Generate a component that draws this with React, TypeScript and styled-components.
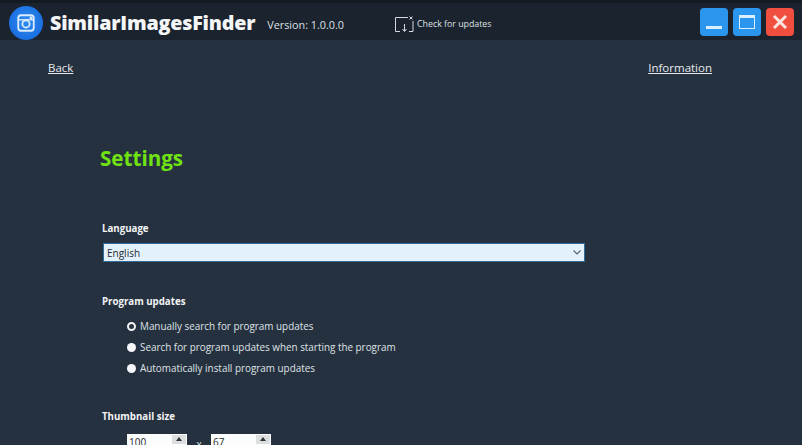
import React from "react"
import styled, { createGlobalStyle } from "styled-components"

const GlobalStyle = createGlobalStyle`
  html, body {
    margin: 0;
    padding: 0;
    background: #263140;
    overflow: hidden;
  }
`

const App = () => {
  return (
    <Page>
      <GlobalStyle />
      <TitleBar>
        <Logo>
          <svg width="20" height="20" viewBox="0 0 22 22" fill="none" stroke="#dcecff" strokeWidth="2">
            <rect x="2.5" y="2.5" width="17" height="17" rx="3" />
            <circle cx="11" cy="12" r="4" />
            <path d="M2.5 7.5H19.5" strokeWidth="1.5" />
            <rect x="15" y="4" width="3" height="3" fill="#dcecff" stroke="none" />
          </svg>
        </Logo>
        <AppName>SimilarImagesFinder</AppName>
        <Version>Version: 1.0.0.0</Version>
        <UpdateLink>
          <svg width="19" height="17" viewBox="0 0 19 17" fill="none" stroke="#d5d9de" strokeWidth="1">
            <path d="M5 15.5H0.5V1.5H13" />
            <path d="M14 15.5H18V5" />
            <path d="M9.5 8V15M7.5 13L9.5 15.5L11.5 13" />
            <path d="M14.5 0.5L17.5 3.5M17.5 0.5L14.5 3.5" />
          </svg>
          <UpdateText>Check for updates</UpdateText>
        </UpdateLink>
        <WindowButtons>
          <WindowButton>
            <svg width="16" height="16" viewBox="0 0 16 16">
              <rect x="0" y="12" width="16" height="3" fill="#d9eeff" />
            </svg>
          </WindowButton>
          <WindowButton>
            <svg width="16" height="14" viewBox="0 0 16 14" fill="none" stroke="#d9eeff">
              <rect x="0.5" y="0.5" width="15" height="13" />
              <rect x="0" y="0" width="16" height="3" fill="#d9eeff" stroke="none" />
            </svg>
          </WindowButton>
          <WindowButton $close>
            <svg width="16" height="16" viewBox="0 0 16 16" stroke="#fbe3df" strokeWidth="3">
              <path d="M2 2L14 14M14 2L2 14" />
            </svg>
          </WindowButton>
        </WindowButtons>
      </TitleBar>
      <Nav>
        <NavLink>Back</NavLink>
        <NavLink>Information</NavLink>
      </Nav>
      <Content>
        <Heading>Settings</Heading>
        <Section $top={50}>
          <Label>Language</Label>
          <SelectBox>
            <span>English</span>
            <svg width="8" height="5" viewBox="0 0 8 5" fill="none" stroke="#5c6670" strokeWidth="1.2">
              <path d="M0.5 0.5L4 4L7.5 0.5" />
            </svg>
          </SelectBox>
        </Section>
        <Section $top={33}>
          <Label>Program updates</Label>
          <RadioList>
            <RadioRow>
              <RadioDot $checked />
              Manually search for program updates
            </RadioRow>
            <RadioRow>
              <RadioDot />
              Search for program updates when starting the program
            </RadioRow>
            <RadioRow>
              <RadioDot />
              Automatically install program updates
            </RadioRow>
          </RadioList>
        </Section>
        <Section $top={33}>
          <Label>Thumbnail size</Label>
          <SizeRow>
            <Spinner>
              100
              <SpinButton />
            </Spinner>
            <Times>x</Times>
            <Spinner>
              67
              <SpinButton />
            </Spinner>
          </SizeRow>
        </Section>
      </Content>
    </Page>
  )
}

const Page = styled.div`
  width: 802px;
  height: 445px;
  overflow: hidden;
  background: #263140;
  color: #eef1f3;
  font-family: "Open Sans", "Noto Sans", sans-serif;
`
const TitleBar = styled.header`
  display: flex;
  align-items: center;
  height: 37px;
  padding: 0 8px 0 9px;
  background: #1b232e;
  border-top: 3px solid #141a22;
`
const Logo = styled.div`
  display: flex;
  align-items: center;
  justify-content: center;
  flex: none;
  width: 34px;
  height: 34px;
  margin-top: 2px;
  border-radius: 50%;
  background: radial-gradient(circle at 50% 45%, #2f8cf2 0%, #1a6fe0 70%, #1460cc 100%);
`
const AppName = styled.div`
  margin: 1px 0 0 7px;
  font-size: 19.7px;
  font-weight: 800;
  letter-spacing: -0.2px;
  color: #f4f5f6;
  white-space: nowrap;
`
const Version = styled.div`
  margin: 5px 0 0 12px;
  font-size: 10.8px;
  color: #dde0e3;
  white-space: nowrap;
`
const UpdateLink = styled.div`
  display: flex;
  align-items: center;
  gap: 3px;
  margin: 5px 0 0 51px;
`
const UpdateText = styled.span`
  font-size: 8.8px;
  color: #dde0e3;
  white-space: nowrap;
`
const WindowButtons = styled.div`
  display: flex;
  gap: 5px;
  margin-left: auto;
`
const WindowButton = styled.div<{ $close?: boolean }>`
  display: flex;
  align-items: center;
  justify-content: center;
  width: 28px;
  height: 28px;
  border-radius: 4px;
  background: ${(p) => (p.$close ? "#f04e3e" : "#2b96ee")};
`
const Nav = styled.nav`
  display: flex;
  justify-content: space-between;
  padding: 19px 90px 0 48px;
`
const NavLink = styled.a`
  font-size: 11.5px;
  line-height: 18px;
  color: #e8ebee;
  text-decoration: underline;
`
const Content = styled.main`
  padding: 67px 0 0 100px;
`
const Heading = styled.h1`
  margin: 0;
  font-size: 20.6px;
  line-height: 28px;
  font-weight: 700;
  color: #70e212;
`
const Section = styled.section<{ $top: number }>`
  margin-top: ${(p) => p.$top}px;
  padding-left: 2px;
`
const Label = styled.div`
  font-size: 9.7px;
  line-height: 14px;
  font-weight: 700;
  color: #f2f4f5;
`
const SelectBox = styled.div`
  display: flex;
  align-items: center;
  justify-content: space-between;
  box-sizing: border-box;
  width: 482px;
  height: 19px;
  margin: 7px 0 0 1px;
  padding: 0 3px;
  border: 1px solid #2f6d9f;
  background: #e3f1fc;
  font-size: 10px;
  color: #26292c;
`
const RadioList = styled.div`
  display: flex;
  flex-direction: column;
  gap: 3px;
  margin: 8px 0 0 25px;
`
const RadioRow = styled.div`
  display: flex;
  align-items: center;
  gap: 4px;
  height: 18px;
  font-size: 9.9px;
  color: #dfe3e6;
  white-space: nowrap;
`
const RadioDot = styled.span<{ $checked?: boolean }>`
  box-sizing: border-box;
  flex: none;
  width: 9px;
  height: 9px;
  border-radius: 50%;
  background: ${(p) => (p.$checked ? "#2a3340" : "#f6f7f8")};
  border: ${(p) => (p.$checked ? "2px solid #f1f2f3" : "none")};
`
const SizeRow = styled.div`
  display: flex;
  align-items: center;
  margin: 10px 0 0 25px;
`
const Spinner = styled.div`
  display: flex;
  align-items: flex-start;
  justify-content: space-between;
  box-sizing: border-box;
  width: 60px;
  height: 20px;
  padding: 1px 0 0 2px;
  background: #fbfcfc;
  font-size: 10px;
  line-height: 14px;
  color: #26292c;
`
const SpinButton = styled.span`
  position: relative;
  flex: none;
  width: 14px;
  height: 9px;
  margin-right: 1px;
  background: #dcdee0;
  &::after {
    content: "";
    position: absolute;
    left: 4px;
    top: 2px;
    border-left: 3px solid transparent;
    border-right: 3px solid transparent;
    border-bottom: 4px solid #303338;
  }
`
const Times = styled.span`
  width: 24px;
  text-align: center;
  font-size: 10px;
  color: #dfe3e6;
`
export default App
